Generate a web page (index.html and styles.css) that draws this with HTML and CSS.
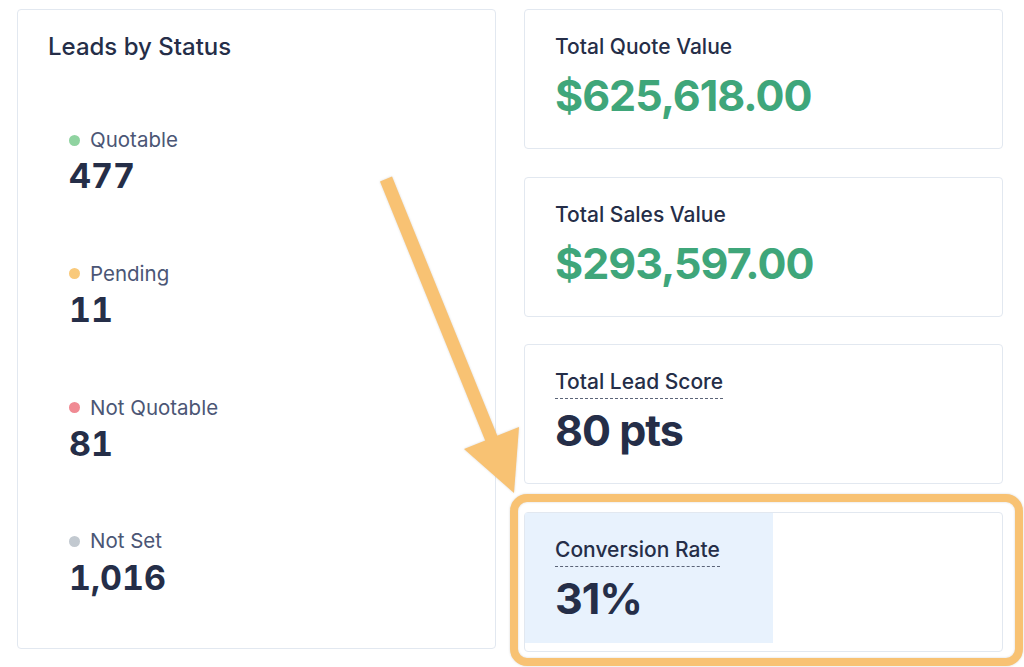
FILE: index.html
```html
<!DOCTYPE html>
<html lang="en">

<head>
    <meta charset="UTF-8">
    <meta name="viewport" content="width=device-width, initial-scale=1.0">
    <title>Leads dashboard</title>
    <link rel="stylesheet" href="styles.css">
</head>

<body>

    <div class="dashboard">
        <div class="card status-card">
            <h2 class="status-title">Leads by Status</h2>

            <ul class="status-list">
                <li class="status-item">
                    <div class="status-label"><span class="dot dot-green"></span>Quotable</div>
                    <div class="status-count">477</div>
                </li>
                <li class="status-item">
                    <div class="status-label"><span class="dot dot-yellow"></span>Pending</div>
                    <div class="status-count">11</div>
                </li>
                <li class="status-item">
                    <div class="status-label"><span class="dot dot-red"></span>Not Quotable</div>
                    <div class="status-count">81</div>
                </li>
                <li class="status-item">
                    <div class="status-label"><span class="dot dot-grey"></span>Not Set</div>
                    <div class="status-count">1,016</div>
                </li>
            </ul>
        </div>

        <div class="stats">
            <div class="card stat-card">
                <div class="stat-body">
                    <div class="stat-title">Total Quote Value</div>
                    <div class="stat-value money">$625,618.00</div>
                </div>
            </div>
            <div class="card stat-card">
                <div class="stat-body">
                    <div class="stat-title">Total Sales Value</div>
                    <div class="stat-value money">$293,597.00</div>
                </div>
            </div>
            <div class="card stat-card">
                <div class="stat-body">
                    <div class="stat-title dotted">Total Lead Score</div>
                    <div class="stat-value">80 pts</div>
                </div>
            </div>
            <div class="card stat-card">
                <div class="stat-body active">
                    <div class="stat-title dotted">Conversion Rate</div>
                    <div class="stat-value">31%</div>
                </div>
            </div>
        </div>
    </div>

    <!-- annotation drawn over the page -->
    <svg class="annotation" width="1024" height="667" viewBox="0 0 1024 667">
        <line x1="386" y1="179" x2="492" y2="440" stroke="#f8c273" stroke-width="13" />
        <polygon points="464,449 519,427 514,493" fill="#f8c273" />
        <rect x="514" y="498" width="505" height="164" rx="13" fill="none" stroke="#f8c273" stroke-width="8" />
    </svg>

</body>

</html>
```

FILE: styles.css
```css
body {
    margin: 0;
    font-family: Inter, "Noto Sans", sans-serif;
    color: #252e48;
    background-color: #fff;
}

.dashboard {
    display: grid;
    grid-template-columns: 479px 479px;
    gap: 28px;
    padding: 9px 0 0 17px;
}

.card {
    box-sizing: border-box;
    background-color: #fff;
    border: 1px solid #e2e8f0;
    border-radius: 4px;
}

/* left card */
.status-card {
    height: 640px;
    padding: 23px 30px;
}

.status-title {
    margin: 0;
    font-size: 24px;
    line-height: 1.2;
    font-weight: 500;
}

.status-list {
    list-style: none;
    margin: 66px 0 0;
    padding: 0 0 0 21px;
    display: flex;
    flex-direction: column;
    gap: 64.5px;
}

.status-label {
    display: flex;
    align-items: center;
    font-size: 20.5px;
    line-height: 1.2;
    color: #4b5675;
}

.dot {
    width: 11px;
    height: 11px;
    border-radius: 50%;
    margin-right: 10px;
}

.dot-green {
    background-color: #8fd3a0;
}

.dot-yellow {
    background-color: #f9c97a;
}

.dot-red {
    background-color: #f08a93;
}

.dot-grey {
    background-color: #c2c9d0;
}

.status-count {
    margin-top: 4px;
    font-size: 34px;
    line-height: 1.2;
    font-weight: 700;
    font-variant-numeric: tabular-nums;
}

/* right column */
.stats {
    display: flex;
    flex-direction: column;
    gap: 27.5px;
}

.stat-card {
    height: 140px;
}

.stat-body {
    box-sizing: border-box;
    padding: 24px 30px;
}

.stat-body.active {
    width: 248px;
    height: 130px;
    background-color: #e8f2fd;
}

.stat-title {
    display: inline-block;
    font-size: 21px;
    line-height: 25px;
    font-weight: 500;
    padding-bottom: 4px;
    border-bottom: 1px solid transparent;
}

.stat-title.dotted {
    border-bottom: 1px dashed #5b6478;
}

.stat-value {
    margin-top: 6px;
    font-size: 43px;
    line-height: 1.2;
    font-weight: 700;
    letter-spacing: -1px;
}

.stat-value.money {
    color: #3fa67a;
}

.annotation {
    position: absolute;
    left: 0;
    top: 0;
    pointer-events: none;
    filter: drop-shadow(0 0 1px rgba(0, 0, 0, 0.15));
}
```
